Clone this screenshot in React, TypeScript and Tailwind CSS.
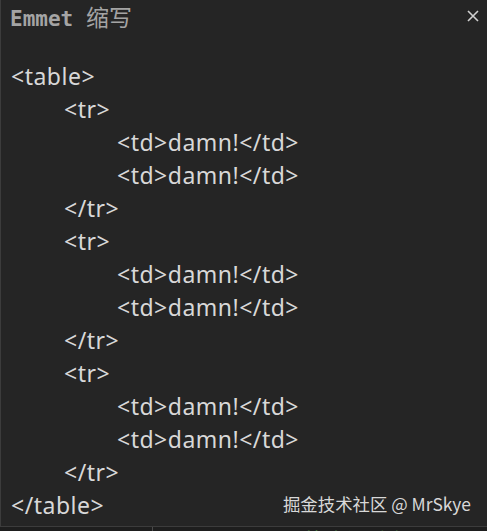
import React from "react";

const lines: { indent: number; text: string }[] = [
  { indent: 0, text: "<table>" },
  { indent: 1, text: "<tr>" },
  { indent: 2, text: "<td>damn!</td>" },
  { indent: 2, text: "<td>damn!</td>" },
  { indent: 1, text: "</tr>" },
  { indent: 1, text: "<tr>" },
  { indent: 2, text: "<td>damn!</td>" },
  { indent: 2, text: "<td>damn!</td>" },
  { indent: 1, text: "</tr>" },
  { indent: 1, text: "<tr>" },
  { indent: 2, text: "<td>damn!</td>" },
  { indent: 2, text: "<td>damn!</td>" },
  { indent: 1, text: "</tr>" },
  { indent: 0, text: "</table>" },
];

const padFor = (i: number) =>
  i === 0 ? "pl-[10px]" : i === 1 ? "pl-[63px]" : "pl-[116px]";

export default function App() {
  return (
    <div className="w-[487px] h-[531px] bg-[#1e1e1e] overflow-hidden flex flex-col">
      <div className="relative h-[527px] shrink-0 bg-[#252525] border-l border-b border-[#3c3c3c]">
        <div className="h-[34px] flex items-center justify-between pl-[9px] pr-[8px]">
          <div
            className="text-[21px] font-bold text-[#a4a4a4]"
            style={{ fontFamily: '"DejaVu Sans Mono", "Noto Sans CJK SC", monospace' }}
          >
            Emmet{" "}
            <span className="font-normal text-[23px]" style={{ fontFamily: '"Noto Sans CJK SC", sans-serif' }}>
              缩写
            </span>
          </div>
          <svg width="12" height="12" viewBox="0 0 12 12" className="mt-[-3px]">
            <path d="M1 1 L11 11 M11 1 L1 11" stroke="#d0d0d0" strokeWidth="1.6" />
          </svg>
        </div>
        <div
          className="pt-[26px] text-[23px] text-[#d8d8d8] tracking-[0.5px]"
          style={{ fontFamily: '"Noto Sans", "Open Sans", sans-serif' }}
        >
          {lines.map((l, i) => (
            <div key={i} className={`h-[33px] leading-[33px] whitespace-pre ${padFor(l.indent)}`}>
              {l.text}
            </div>
          ))}
        </div>
        <div
          className="absolute right-[16px] bottom-[9px] text-[17.4px] text-[#d8d8d8]"
          style={{ fontFamily: '"Noto Sans CJK SC", "Noto Sans", sans-serif' }}
        >
          掘金技术社区 @ MrSkye
        </div>
      </div>
      <div className="flex h-[4px] overflow-hidden">
        <div className="w-[153px] border-r border-[#4a4a4a] bg-[#1e1e1e]" />
        <div
          className="flex-1 relative text-[22px] text-[#5a9a4a] leading-none"
          style={{ fontFamily: '"Noto Sans CJK SC", sans-serif' }}
        >
          <div className="absolute left-[118px] top-[1px] whitespace-pre">用  的资源路径</div>
        </div>
      </div>
    </div>
  );
}
